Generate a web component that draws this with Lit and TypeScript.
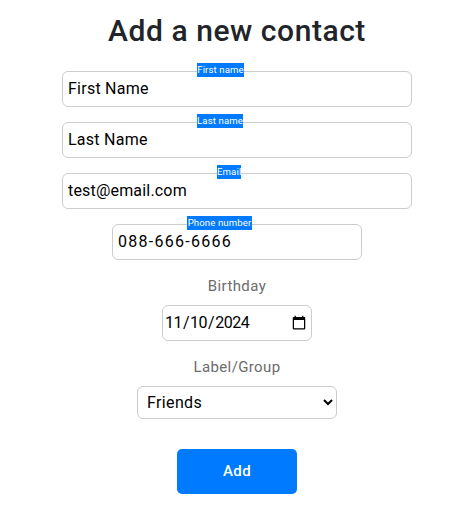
import { LitElement, html, css } from "lit";
import { customElement, property } from "lit/decorators.js";

@customElement("text-field")
class TextField extends LitElement {
  @property() label = "";
  @property() value = "";
  @property({ type: Number }) labelX = 0;
  @property({ type: Number }) labelWidth = 0;
  @property({ type: Number }) spacing = 0;

  static styles = css`
    :host { display: block; position: relative; height: 36px; }
    input {
      box-sizing: border-box; width: 100%; height: 36px; display: block; margin: 0;
      border: 1px solid #ccc; border-radius: 6px; padding: 0 5px 2px; background: #fff;
      font: 16px Roboto, "Noto Sans", sans-serif; color: #000; outline: none;
    }
    .label {
      position: absolute; top: -8px; height: 14px; line-height: 14px;
      background: #007bff; color: #fff; text-align: center; white-space: nowrap;
      font-size: 9.6px; font-family: Roboto, "Noto Sans", sans-serif; font-weight: 400;
      letter-spacing: 0.12px;
    }
  `;

  render() {
    return html`
      <input type="text" .value=${this.value} style="letter-spacing:${this.spacing}px" />
      <span class="label" style="left:${this.labelX}px;width:${this.labelWidth}px">${this.label}</span>
    `;
  }
}

@customElement("app-root")
class AppRoot extends LitElement {
  static styles = css`
    :host {
      display: block; height: 518px; overflow: hidden; background: #fff;
      font: 16px Roboto, "Noto Sans", sans-serif;
    }
    form { display: flex; flex-direction: column; align-items: center; }
    h1 {
      margin: 12px 0 21px; height: 38px; line-height: 38px; font-size: 30px;
      font-weight: 500; color: #212529; letter-spacing: 0.55px; white-space: nowrap;
    }
    text-field { width: 350px; margin-bottom: 15px; }
    text-field.phone { width: 250px; }
    .caption {
      height: 20px; line-height: 20px; font-size: 15px; color: #6c6c6c;
      letter-spacing: 0.38px; white-space: nowrap;
    }
    .birthday { margin-top: 1px; }
    .group { margin-top: 16px; }
    .date, select {
      box-sizing: border-box; border: 1px solid #ccc; border-radius: 6px;
      background: #fff; color: #000; font: 16px Roboto, "Noto Sans", sans-serif; outline: none;
    }
    .date { width: 150px; height: 36px; margin: 9px 0 0; padding: 0 2px 1px 1px; letter-spacing: -0.5px; }
    .date::-webkit-calendar-picker-indicator { margin-right: 0; }
    select { width: 200px; height: 33px; margin: 9px 0 0; padding: 0 5px; letter-spacing: 0.37px; }
    button {
      width: 120px; height: 45px; margin: 30px 0 0; padding: 0 0 1px; border: 0;
      border-radius: 5px; background: #007bff; color: #fff; letter-spacing: 0.35px;
      font: 500 15px Roboto, "Noto Sans", sans-serif;
    }
  `;

  render() {
    return html`
      <form>
        <h1>Add a new contact</h1>
        <text-field label="First name" value="First Name" .labelX=${135} .labelWidth=${47} .spacing=${0.25}></text-field>
        <text-field label="Last name" value="Last Name" .labelX=${135} .labelWidth=${46} .spacing=${0.25}></text-field>
        <text-field label="Email" value="test@email.com" .labelX=${155} .labelWidth=${24} .spacing=${0.18}></text-field>
        <text-field class="phone" label="Phone number" value="088-666-6666" .labelX=${75} .labelWidth=${65} .spacing=${1.28}></text-field>
        <label class="caption birthday">Birthday</label>
        <input class="date" type="date" value="2024-11-10" />
        <label class="caption group">Label/Group</label>
        <select><option>Friends</option></select>
        <button type="button">Add</button>
      </form>
    `;
  }
}
